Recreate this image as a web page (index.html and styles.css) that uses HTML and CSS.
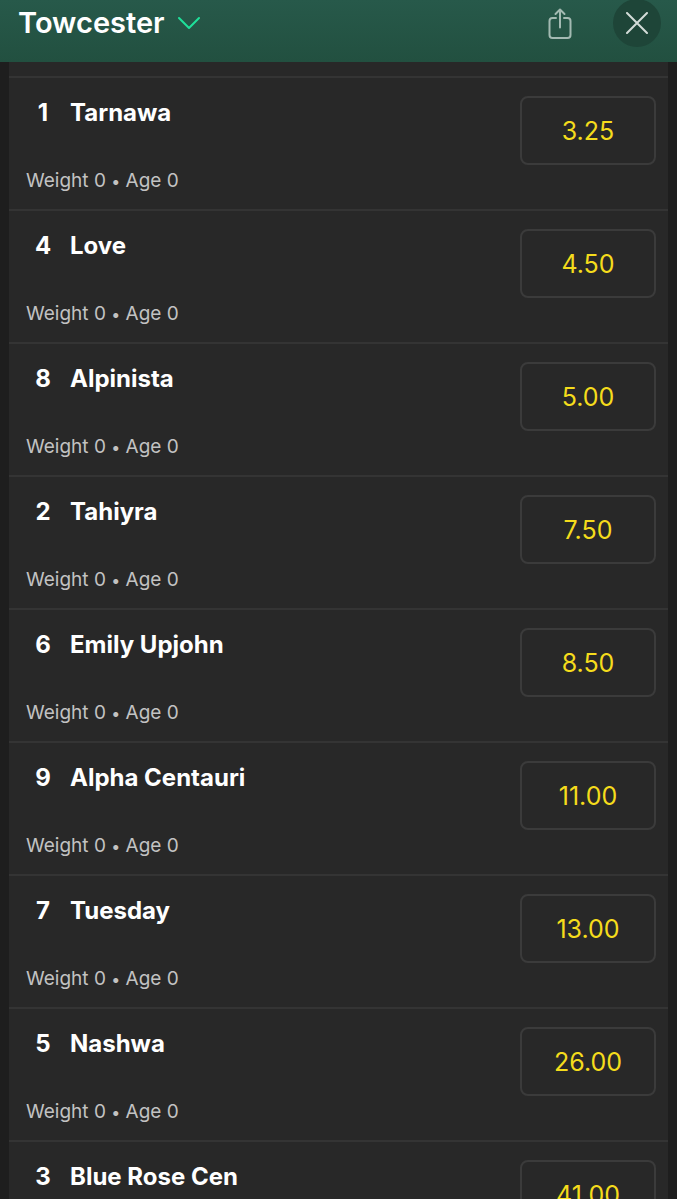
FILE: index.html
```html
<!DOCTYPE html>
<html lang="en">
<head>
    <meta charset="UTF-8">
    <meta name="viewport" content="width=device-width, initial-scale=1.0">
    <title>Towcester</title>
    <link rel="stylesheet" href="styles.css">
</head>
<body>
    <header class="header">
        <h1 class="header-title">
            <button class="btn-meeting" type="button">
                Towcester
                <svg class="chevron" width="22" height="14" viewBox="0 0 22 14" aria-hidden="true">
                    <path d="M1 2 L11 12 L21 2" />
                </svg>
            </button>
        </h1>
        <button class="btn-share" type="button" aria-label="Share">
            <svg width="24" height="34" viewBox="0 0 24 34" aria-hidden="true">
                <path d="M8 12 H4.5 Q1.5 12 1.5 15 V29 Q1.5 32 4.5 32 H19.5 Q22.5 32 22.5 29 V15 Q22.5 12 19.5 12 H16" />
                <path d="M12 21.5 V4 M7.5 8 L12 3.5 L16.5 8" />
            </svg>
        </button>
        <button class="btn-close" type="button" aria-label="Close">
            <svg width="22" height="22" viewBox="0 0 22 22" aria-hidden="true">
                <path d="M1 1 L21 21 M21 1 L1 21" />
            </svg>
        </button>
    </header>

    <!-- Runners -->
    <main class="content">
        <ul class="runners">
            <li class="runner">
                <div class="runner-info">
                    <h2 class="runner-name"><span class="number">1</span>Tarnawa</h2>
                    <p class="runner-details">Weight 0 <span class="dot">•</span> Age 0</p>
                </div>
                <button class="btn-odds" type="button">3.25</button>
            </li>
            <li class="runner">
                <div class="runner-info">
                    <h2 class="runner-name"><span class="number">4</span>Love</h2>
                    <p class="runner-details">Weight 0 <span class="dot">•</span> Age 0</p>
                </div>
                <button class="btn-odds" type="button">4.50</button>
            </li>
            <li class="runner">
                <div class="runner-info">
                    <h2 class="runner-name"><span class="number">8</span>Alpinista</h2>
                    <p class="runner-details">Weight 0 <span class="dot">•</span> Age 0</p>
                </div>
                <button class="btn-odds" type="button">5.00</button>
            </li>
            <li class="runner">
                <div class="runner-info">
                    <h2 class="runner-name"><span class="number">2</span>Tahiyra</h2>
                    <p class="runner-details">Weight 0 <span class="dot">•</span> Age 0</p>
                </div>
                <button class="btn-odds" type="button">7.50</button>
            </li>
            <li class="runner">
                <div class="runner-info">
                    <h2 class="runner-name"><span class="number">6</span>Emily Upjohn</h2>
                    <p class="runner-details">Weight 0 <span class="dot">•</span> Age 0</p>
                </div>
                <button class="btn-odds" type="button">8.50</button>
            </li>
            <li class="runner">
                <div class="runner-info">
                    <h2 class="runner-name"><span class="number">9</span>Alpha Centauri</h2>
                    <p class="runner-details">Weight 0 <span class="dot">•</span> Age 0</p>
                </div>
                <button class="btn-odds" type="button">11.00</button>
            </li>
            <li class="runner">
                <div class="runner-info">
                    <h2 class="runner-name"><span class="number">7</span>Tuesday</h2>
                    <p class="runner-details">Weight 0 <span class="dot">•</span> Age 0</p>
                </div>
                <button class="btn-odds" type="button">13.00</button>
            </li>
            <li class="runner">
                <div class="runner-info">
                    <h2 class="runner-name"><span class="number">5</span>Nashwa</h2>
                    <p class="runner-details">Weight 0 <span class="dot">•</span> Age 0</p>
                </div>
                <button class="btn-odds" type="button">26.00</button>
            </li>
            <li class="runner">
                <div class="runner-info">
                    <h2 class="runner-name"><span class="number">3</span>Blue Rose Cen</h2>
                </div>
                <button class="btn-odds" type="button">41.00</button>
            </li>
        </ul>
    </main>
</body>
</html>
```
FILE: styles.css
```css
* {
    box-sizing: border-box;
}

body {
    display: flex;
    flex-direction: column;
    height: 100vh;
    margin: 0;
    overflow: hidden;
    background-color: #1e1e1e;
    color: #fff;
    font-family: Inter, sans-serif;
}

h1,
h2,
p,
ul {
    margin: 0;
    padding: 0;
}

button {
    padding: 0;
    border: none;
    background: none;
    color: inherit;
    font: inherit;
    cursor: pointer;
}

svg {
    display: block;
    fill: none;
    stroke-linecap: round;
    stroke-linejoin: round;
    stroke-width: 2;
}

/* Header */
.header {
    display: flex;
    align-items: center;
    flex-shrink: 0;
    height: 62px;
    padding: 0 16px 16px 18px;
    background: linear-gradient(#27594a, #225040);
}

.header-title {
    flex-grow: 1;
    font-size: 29px;
    font-weight: 600;
    line-height: 36px;
}

.btn-meeting {
    display: flex;
    align-items: center;
    gap: 13px;
}

.chevron {
    stroke: #1fe09a;
}

.btn-share {
    margin-right: 41px;
    stroke: #a3bab2;
}

.btn-close {
    display: grid;
    place-items: center;
    width: 48px;
    height: 48px;
    border-radius: 50%;
    background-color: #1e4538;
    stroke: #d3dcd8;
}

/* Runners */
.content {
    flex-grow: 1;
    min-height: 0;
    margin: 0 9px;
    padding-top: 14px;
    overflow-y: auto;
    scrollbar-width: none;
    background-color: #282828;
}

.runners {
    list-style: none;
}

.runner {
    display: flex;
    justify-content: space-between;
    align-items: flex-start;
    height: 133px;
    padding: 18px 12px 0 17px;
    border-top: 2px solid #343434;
}

.runner-name {
    display: flex;
    gap: 10px;
    font-size: 24px;
    font-weight: 700;
    line-height: 34px;
}

.number {
    width: 34px;
    text-align: center;
}

.runner-details {
    margin-top: 37px;
    color: #c2c2c2;
    font-size: 19px;
    line-height: 28px;
}

.dot {
    font-size: 16px;
}

.btn-odds {
    width: 136px;
    height: 69px;
    border: 2px solid #3b3b3b;
    border-radius: 8px;
    color: #f5dc1c;
    font-size: 25px;
}
```
